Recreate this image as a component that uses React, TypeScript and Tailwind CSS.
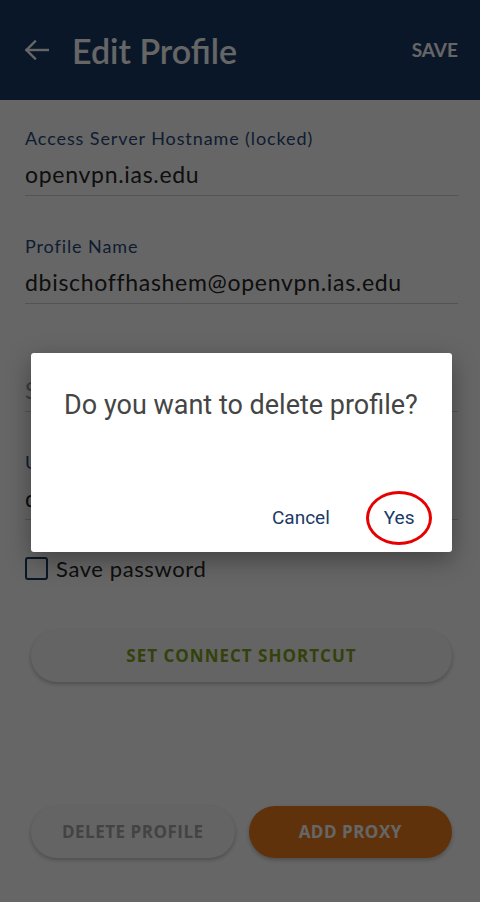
const raleway = { fontFamily: "Lato, 'Open Sans', sans-serif" }

function Field({ label, value, placeholder }: { label?: string; value?: string; placeholder?: string }) {
    return (
        <div className="mt-[38px] first:mt-0">
            <div className="h-[24px] text-[18px] leading-[24px] tracking-[0.9px] text-[#2a4a7a]">{label ?? ""}</div>
            <div className="mt-[9px] h-[30px] text-[23px] leading-[30px] tracking-[0.7px] text-[#262626]">
                {value ?? <span className="text-[#9a9a9a]">{placeholder}</span>}
            </div>
            <div className="mt-[6px] h-px bg-[#d0d0d0]" />
        </div>
    )
}

export default function App() {
    return (
        <div className="relative h-[902px] w-[480px] overflow-hidden bg-white" style={raleway}>
            {/* app bar */}
            <div className="flex h-[100px] items-center bg-[#1b3a66] pl-[25px] pr-[22px]">
                <svg width="24" height="20" viewBox="0 0 24 20" fill="none" stroke="white" strokeWidth="2.4" strokeLinecap="square">
                    <path d="M1.5 10H23" />
                    <path d="M10 1.5L1.5 10L10 18.5" />
                </svg>
                <h1 className="ml-[23px] text-[34px] font-semibold text-white">Edit Profile</h1>
                <span className="ml-auto text-[19px] font-bold text-white">SAVE</span>
            </div>

            {/* form */}
            <div className="pl-[25px] pr-[22px] pt-[26px]">
                <Field label="Access Server Hostname (locked)" value="openvpn.ias.edu" />
                <Field label="Profile Name" value="dbischoffhashem@openvpn.ias.edu" />
                <Field placeholder="Server Override" />
                <Field label="Username" value="dbischoffhashem" />

                <div className="mt-[32px] flex items-center gap-[8px]">
                    <div className="h-[23px] w-[23px] rounded-[3px] border-[2.5px] border-[#1b3a66]" />
                    <span className="text-[22px] tracking-[0.6px] text-[#262626]">Save password</span>
                </div>
            </div>

            <div className="pl-[31px] pr-[28px] pt-[45px]">
                <button
                    className="h-[52px] w-full rounded-full bg-[#fafafa] text-[17px] font-bold tracking-[1px] text-[#7fa51c] shadow-[0_2px_4px_rgba(0,0,0,0.25)]"
                    style={{ fontFamily: "'Open Sans', sans-serif" }}
                >
                    SET CONNECT SHORTCUT
                </button>
            </div>

            <div className="absolute bottom-[44px] left-[31px] right-[28px] flex gap-[14px]" style={{ fontFamily: "'Open Sans', sans-serif" }}>
                <button className="h-[52px] flex-1 rounded-full bg-[#fafafa] text-[17px] font-bold tracking-[0.5px] text-[#a8a8a8] shadow-[0_2px_4px_rgba(0,0,0,0.25)]">
                    DELETE PROFILE
                </button>
                <button className="h-[52px] flex-1 rounded-full bg-[#f07d1e] text-[17px] font-bold tracking-[0.5px] text-white shadow-[0_2px_4px_rgba(0,0,0,0.25)]">
                    ADD PROXY
                </button>
            </div>

            {/* dialog */}
            <div className="absolute inset-0 flex items-center justify-center bg-black/60">
                <div
                    className="ml-[2px] mt-[3px] flex h-[199px] w-[421px] flex-col rounded-[3px] bg-white shadow-[0_8px_24px_rgba(0,0,0,0.35)]"
                    style={{ fontFamily: "Roboto, sans-serif" }}
                >
                    <p className="pt-[35px] text-center text-[27px] leading-[34px] text-[#454545]">Do you want to delete profile?</p>
                    <div className="mt-auto flex items-center justify-end pb-[20px] pr-[37px] text-[19px] text-[#1b3a66]">
                        <button className="mr-[54px]">Cancel</button>
                        <button className="relative">
                            Yes
                            <span className="pointer-events-none absolute left-1/2 top-1/2 h-[54px] w-[66px] -translate-x-1/2 -translate-y-1/2 rounded-[50%] border-[3px] border-[#e60000]" />
                        </button>
                    </div>
                </div>
            </div>
        </div>
    )
}
